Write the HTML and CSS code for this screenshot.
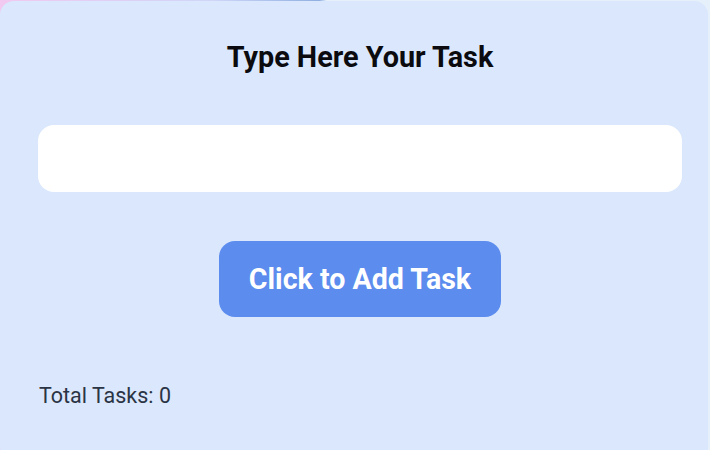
FILE: index.html
```html
<!DOCTYPE html>
<html lang="en">
<head>
<meta charset="utf-8">
<title>Task</title>
<link rel="stylesheet" href="styles.css">
</head>
<body>
<div class="card">
  <h1 class="title">Type Here Your Task</h1>
  <input class="task-input" type="text" aria-label="Task">
  <div class="actions">
    <button class="add-btn" type="button">Click to Add Task</button>
  </div>
  <p class="total">Total Tasks: 0</p>
</div>
</body>
</html>
```
FILE: styles.css
```css
html, body {
  margin: 0;
  padding: 0;
  height: 100%;
}
body {
  background: linear-gradient(90deg, #f2c9f0 0%, #cfd6f8 30%, #8fb0e0 45%, #e6f0fb 46%, #e6f0fb 100%);
  font-family: Roboto, "Liberation Sans", sans-serif;
  overflow: hidden;
}
.card {
  box-sizing: border-box;
  margin: 1px 2px 0 0;
  height: 460px;
  background: #dae7fc;
  border-radius: 14px;
  padding: 38px 26px 0 38px;
  display: flex;
  flex-direction: column;
}
.title {
  margin: 0;
  text-align: center;
  font-size: 28.8px;
  font-weight: 700;
  color: #0b0b0f;
  line-height: 37px;
}
.task-input {
  margin-top: 49px;
  height: 67px;
  box-sizing: border-box;
  border: none;
  border-radius: 16px;
  background: #ffffff;
  outline: none;
  padding: 0 16px;
  font-family: inherit;
  font-size: 20px;
}
.actions {
  display: flex;
  justify-content: center;
  margin-top: 49px;
}
.add-btn {
  width: 282px;
  height: 76px;
  border: none;
  border-radius: 16px;
  background: #5b8cee;
  color: #ffffff;
  font-family: inherit;
  font-size: 28.6px;
  font-weight: 700;
}
.total {
  margin: 66px 0 0 1px;
  font-size: 21.5px;
  color: #2b3444;
  line-height: 26px;
}
```
